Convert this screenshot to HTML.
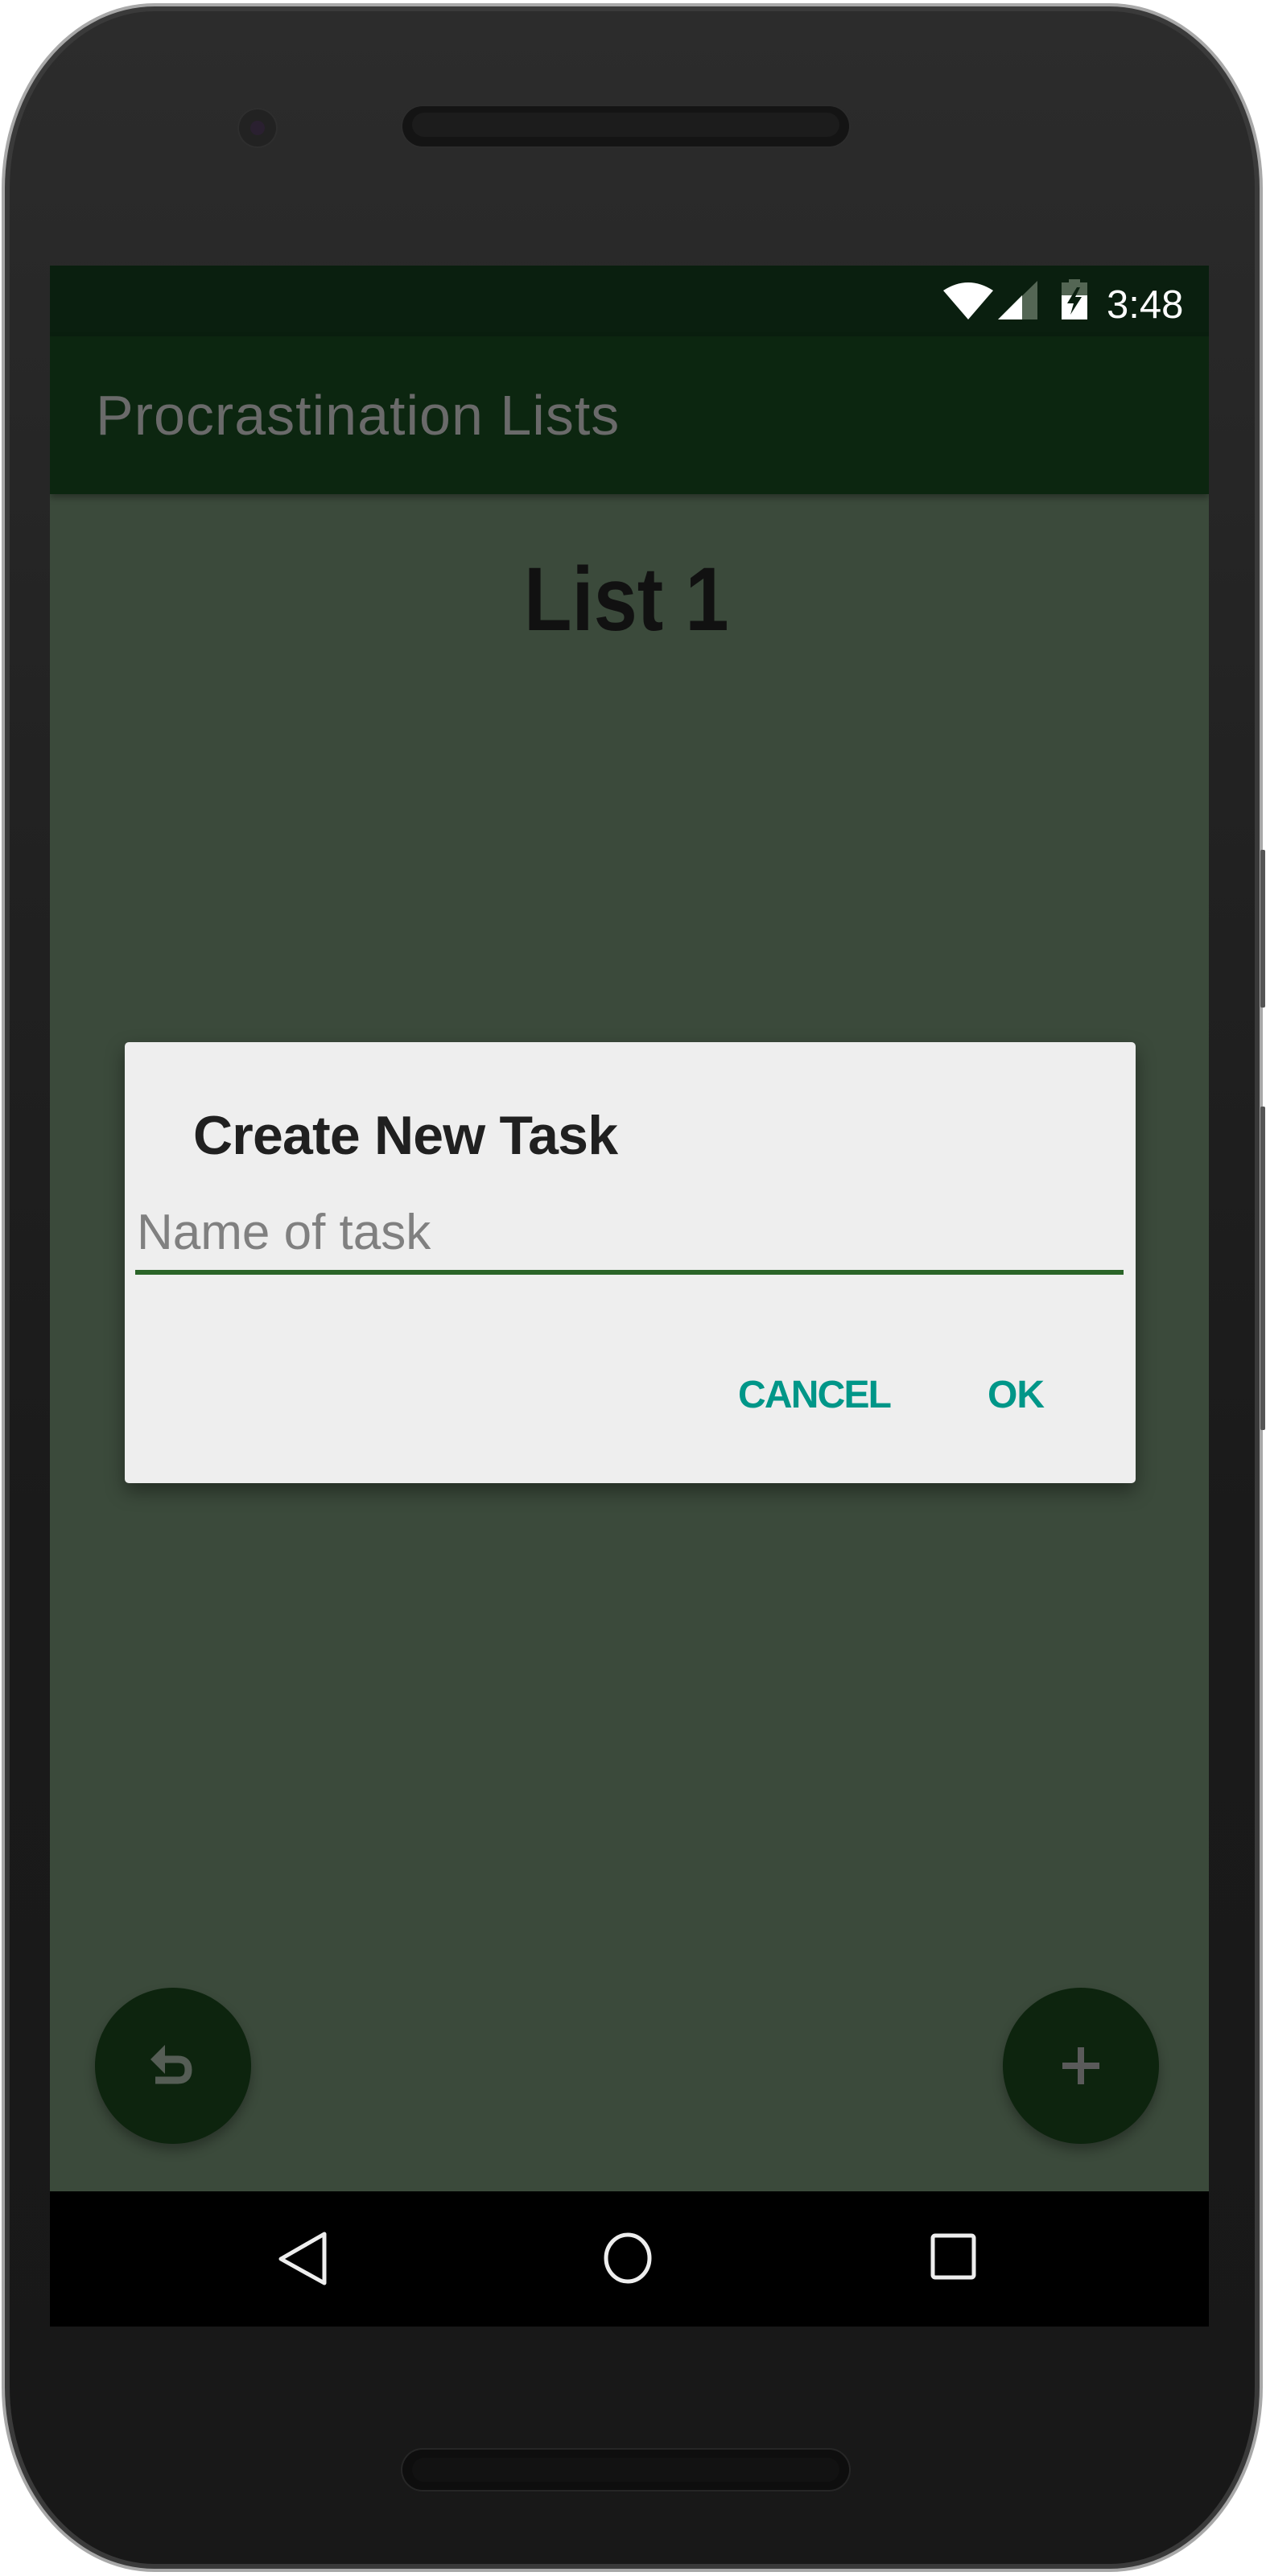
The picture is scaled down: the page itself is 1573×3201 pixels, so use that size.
<!DOCTYPE html>
<html><head><meta charset="utf-8">
<style>
html,body{margin:0;padding:0;background:#fff;}
body{width:1573px;height:3201px;position:relative;overflow:hidden;font-family:"Liberation Sans",sans-serif;}
.abs{position:absolute;}
</style></head>
<body>
<!-- phone body -->
<div class="abs" style="left:2px;top:4px;width:1567px;height:3192px;border-radius:190px/230px;background:#a8a8a8;"></div>
<div class="abs" style="left:6px;top:8px;width:1559px;height:3184px;border-radius:186px/226px;background:#3a3a3a;"></div>
<div class="abs" style="left:12px;top:14px;width:1547px;height:3172px;border-radius:180px/220px;background:linear-gradient(#2c2c2c,#222 30%,#1a1a1a 60%,#181818);"></div>
<!-- side buttons -->
<div class="abs" style="left:1566px;top:1056px;width:6px;height:196px;background:#555;border-radius:2px;"></div>
<div class="abs" style="left:1566px;top:1375px;width:6px;height:402px;background:#555;border-radius:2px;"></div>
<!-- camera & speakers -->
<div class="abs" style="left:297px;top:136px;width:46px;height:46px;border-radius:50%;background:#222;box-shadow:0 0 0 2px #2e2e2e;"></div>
<div class="abs" style="left:311px;top:150px;width:18px;height:18px;border-radius:50%;background:#2a2030;"></div>
<div class="abs" style="left:500px;top:132px;width:555px;height:50px;border-radius:25px;background:#141414;box-shadow:0 0 0 2px #2c2c2c;"></div>
<div class="abs" style="left:512px;top:140px;width:531px;height:30px;border-radius:15px;background:#1c1c1c;"></div>
<div class="abs" style="left:500px;top:3044px;width:555px;height:50px;border-radius:25px;background:#0e0e0e;box-shadow:0 0 0 2px #262626;"></div>
<div class="abs" style="left:512px;top:3054px;width:531px;height:30px;border-radius:15px;background:#121212;"></div>

<!-- screen -->
<div class="abs" style="left:62px;top:330px;width:1440px;height:2561px;background:#3b4a3b;overflow:hidden;">
  <div class="abs" style="left:0;top:0;width:1440px;height:88px;background:#0a1f0f;"></div>
  <svg class="abs" style="left:1110px;top:17px" width="300" height="52" viewBox="0 0 300 52">
    <path d="M0 14 Q31 -6 62 14 L31 50 Z" fill="#fff"/>
    <polygon points="68,50 117,2 117,50" fill="#546654"/>
    <polygon points="68,50 98,20 98,50" fill="#fff"/>
    <rect x="147" y="4" width="32" height="46" fill="#546654"/>
    <rect x="156" y="0" width="14" height="6" fill="#546654"/>
    <rect x="147" y="20" width="32" height="30" fill="#fff"/>
    <polygon points="166,10 154,30 162,30 158,44 172,22 164,22 170,10" fill="#0a1f0f"/>
  </svg>
  <div class="abs" style="left:1313px;top:21px;font-size:49px;color:#fff;line-height:56px;">3:48</div>
  <div class="abs" style="left:0;top:88px;width:1440px;height:196px;background:#0c2610;box-shadow:0 4px 8px rgba(0,0,0,.35);"></div>
  <div class="abs" style="left:57px;top:146px;font-size:70px;color:#6a6a6a;line-height:80px;letter-spacing:1px;">Procrastination Lists</div>
  <div class="abs" style="left:0;top:355px;width:1432px;text-align:center;line-height:120px;">
    <span style="display:inline-block;font-size:112px;font-weight:bold;color:#111;transform:scaleX(0.87);">List 1</span>
  </div>
  <!-- FABs -->
  <div class="abs" style="left:56px;top:2140px;width:194px;height:194px;border-radius:50%;background:#0d240e;box-shadow:0 8px 14px rgba(0,0,0,.3);"></div>
  <svg class="abs" style="left:123px;top:2207px" width="60" height="60" viewBox="0 0 60 60">
    <path d="M16 22 H36 Q49 22 49 35 Q49 48 36 48 H8" fill="none" stroke="#555d55" stroke-width="9"/>
    <polygon points="2,22 20,4 20,40" fill="#555d55"/>
  </svg>
  <div class="abs" style="left:1184px;top:2140px;width:194px;height:194px;border-radius:50%;background:#0d240e;box-shadow:0 8px 14px rgba(0,0,0,.3);"></div>
  <div class="abs" style="left:1277px;top:2214px;width:8px;height:46px;background:#5a5a5a;"></div>
  <div class="abs" style="left:1258px;top:2233px;width:46px;height:8px;background:#5a5a5a;"></div>
  <!-- nav bar -->
  <div class="abs" style="left:0;top:2393px;width:1440px;height:168px;background:#000;"></div>
  <svg class="abs" style="left:0;top:2393px" width="1440" height="168" viewBox="0 0 1440 168">
    <polygon points="341,53 341,114 287,84" fill="none" stroke="#eee" stroke-width="5" stroke-linejoin="round"/>
    <ellipse cx="718" cy="83" rx="27" ry="29" fill="none" stroke="#eee" stroke-width="5"/>
    <rect x="1097" y="55" width="51" height="52" rx="3" fill="none" stroke="#eee" stroke-width="5"/>
  </svg>
</div>

<!-- dialog -->
<div class="abs" style="left:155px;top:1295px;width:1256px;height:548px;background:#eeeeee;border-radius:5px;box-shadow:0 10px 24px rgba(0,0,0,.4);">
  <div class="abs" style="left:85px;top:76px;font-size:68px;font-weight:bold;color:#202020;line-height:80px;letter-spacing:-0.8px;">Create New Task</div>
  <div class="abs" style="left:15px;top:201px;font-size:62px;color:#808080;line-height:72px;">Name of task</div>
  <div class="abs" style="left:13px;top:283px;width:1228px;height:6px;background:#2a6428;"></div>
  <div class="abs" style="left:762px;top:411px;font-size:48px;font-weight:bold;color:#009688;line-height:56px;letter-spacing:-1.8px;">CANCEL</div>
  <div class="abs" style="left:1072px;top:411px;font-size:48px;font-weight:bold;color:#009688;line-height:56px;letter-spacing:-1px;">OK</div>
</div>
</body></html>
